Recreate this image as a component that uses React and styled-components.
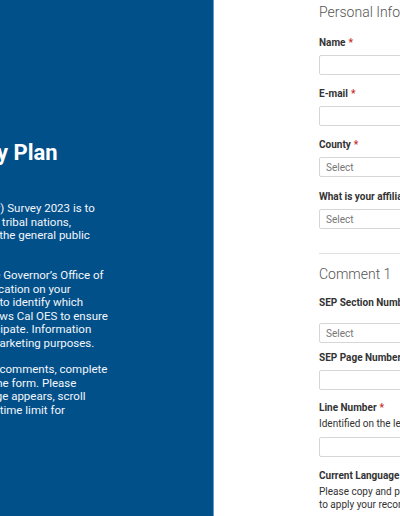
import React from 'react';
import styled, { createGlobalStyle } from 'styled-components';

const GlobalStyles = createGlobalStyle`
  html, body {
    margin: 0;
    padding: 0;
    background: #ffffff;
    overflow: hidden;
  }
  body {
    font-family: Roboto, "Liberation Sans", Arial, sans-serif;
  }
`;

const Page = styled.div`
  display: flex;
  height: 516px;
  margin-left: -200px;
  width: 720px;
`;

const Sidebar = styled.aside`
  width: 414px;
  flex-shrink: 0;
  background: #02508a;
  border-right: 1px solid #5f9ccb;
  padding: 140px 0 0 40px;
  box-sizing: border-box;
  color: #f2f6fa;
`;

const Title = styled.h1`
  margin: 0 0 36px;
  font-size: 22px;
  line-height: 26px;
  font-weight: 700;
  color: #ffffff;
  white-space: pre;
`;

const Intro = styled.p`
  margin: 0 0 13px;
  font-size: 11.5px;
  line-height: 13.5px;
  white-space: pre;
`;

const Main = styled.main`
  flex: 1;
  padding: 4px 0 0 105px;
`;

const Form = styled.form`
  width: 320px;
  display: flex;
  flex-direction: column;
`;

const SectionTitle = styled.h2`
  margin: 0 0 ${({ $gap }) => $gap ?? 16}px;
  font-size: 14px;
  line-height: 17px;
  font-weight: 300;
  color: #555;
  white-space: nowrap;
`;

const Divider = styled.hr`
  border: none;
  border-top: 1px solid #e2e2e2;
  margin: 0 0 12px;
`;

const Field = styled.div`
  display: flex;
  flex-direction: column;
  margin-bottom: ${({ $space }) => $space ?? 13}px;
`;

const Label = styled.label`
  font-size: 10px;
  line-height: 12px;
  font-weight: 700;
  color: #333;
  white-space: nowrap;
  margin-bottom: ${({ $gap }) => $gap ?? 6}px;
`;

const Required = styled.span`
  color: #c9302c;
  margin-left: 3px;
`;

const Hint = styled.div`
  font-size: 10px;
  line-height: 13px;
  color: #333;
  white-space: pre;
  margin: -3px 0 7px;
`;

const Input = styled.div`
  height: 18px;
  border: 1px solid #d6d6d6;
  border-radius: 2px;
  background: #fff;
  display: flex;
  align-items: center;
  padding: 0 6px;
  font-size: 10px;
  color: #777;
`;

const intro = [
  'Our State Emergency Plan (SEP) Survey 2023 is to\ngather feedback from counties, tribal nations,\nPrivate Sector businesses, and the general public\non the SEP.',
  'This survey is conducted by the Governor\u2019s Office of\nEmergency Services collects location on your\ncounty and affiliations, in order to identify which\nstakeholders respond. This allows Cal OES to ensure\ndiverse communities can participate. Information\ncollected will not be used for marketing purposes.',
  'If you would like to provide any comments, complete\nall required fields, and submit the form. Please\nnote that when an error message appears, scroll\nup to review errors. There is no time limit for\nthe survey.',
];

const FormField = ({ label, required, select, hint, gap, space }) => (
  <Field $space={space}>
    <Label $gap={gap}>
      {label}
      {required && <Required>*</Required>}
    </Label>
    {hint && <Hint>{hint}</Hint>}
    <Input>{select ? 'Select' : ''}</Input>
  </Field>
);

const App = () => {
  return (
    <>
      <GlobalStyles />
      <Page>
        <Sidebar>
          <Title>State Emergency Plan</Title>
          {intro.map((text, i) => (
            <Intro key={i}>{text}</Intro>
          ))}
        </Sidebar>
        <Main>
          <Form>
            <SectionTitle>Personal Information</SectionTitle>
            <FormField label="Name" required />
            <FormField label="E-mail" required />
            <FormField label="County" required select space={14} />
            <FormField label="What is your affiliation?" select space={24} />
            <Divider />
            <SectionTitle $gap={14}>Comment 1</SectionTitle>
            <FormField label="SEP Section Number" select gap={14} space={9} />
            <FormField label="SEP Page Number" space={12} />
            <FormField
              label="Line Number"
              required
              hint="Identified on the left side of each page"
            />
            <FormField
              label="Current Language"
              hint={'Please copy and paste the current language you would like\nto apply your recommendation to'}
            />
          </Form>
        </Main>
      </Page>
    </>
  );
};

export default App;
